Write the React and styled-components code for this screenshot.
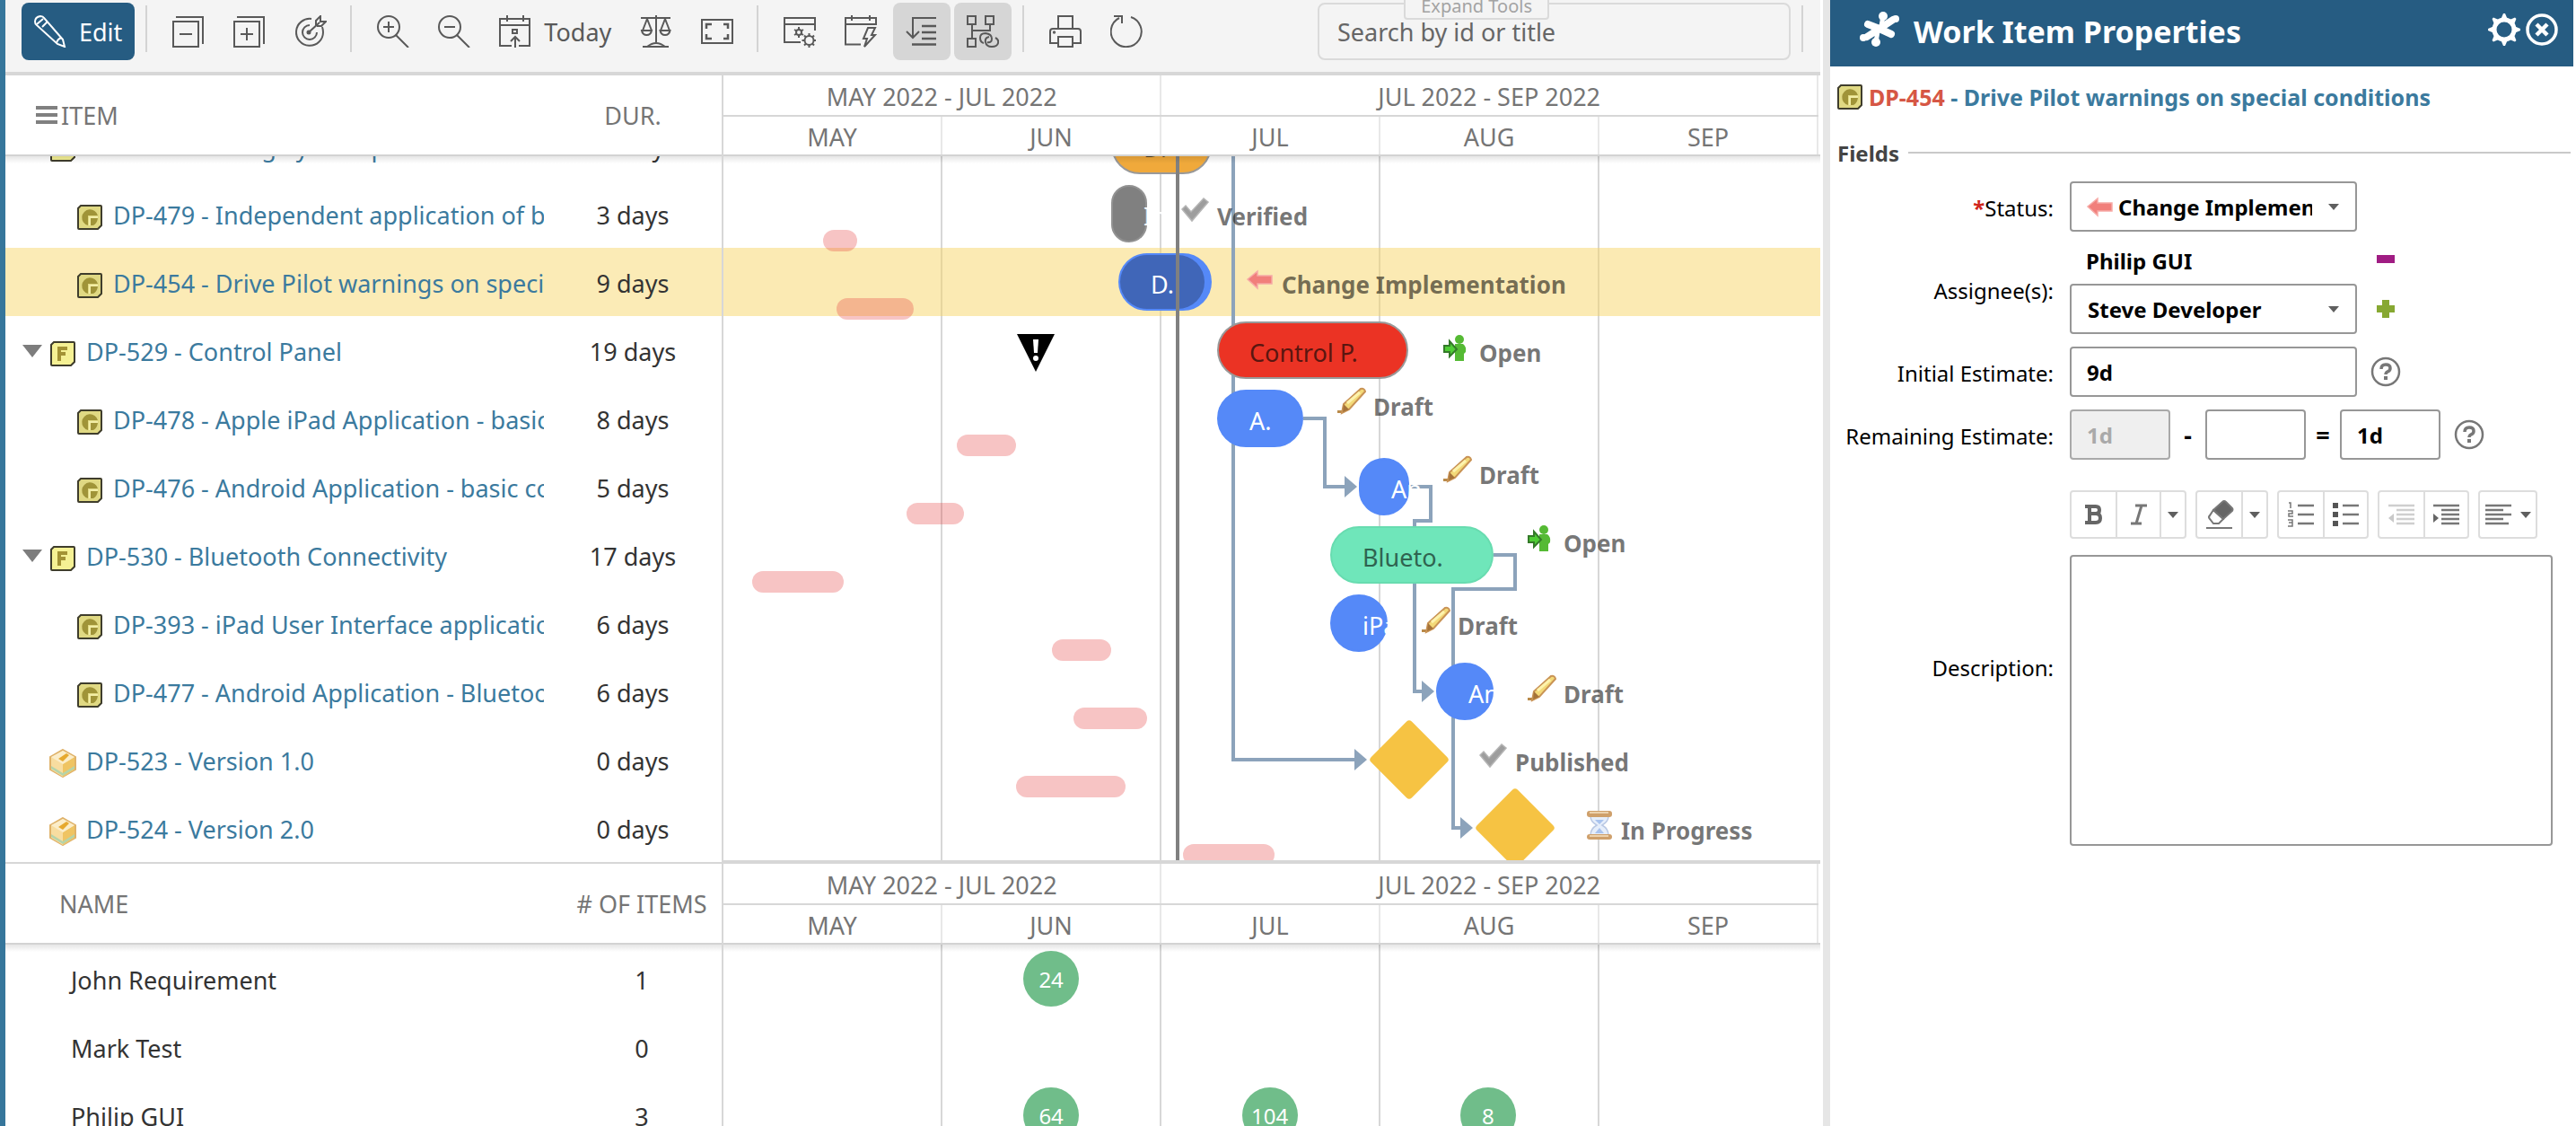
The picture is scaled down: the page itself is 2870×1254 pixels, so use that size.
import React, { useState } from 'react';
import styled, { createGlobalStyle, css } from 'styled-components';

const GlobalStyle = createGlobalStyle`
  * {
    box-sizing: border-box;
  }

  body {
    margin: 0;
    overflow: hidden;
    background: #ffffff;
    font-family: 'Noto Sans', 'Open Sans', sans-serif;
    font-size: 27px;
    color: #333333;
  }

  button, input, select, textarea {
    font-family: inherit;
    color: inherit;
  }
`;

const Page = styled.div`
  display: flex;
  height: 100vh;
  overflow: hidden;
`;

const PlanPane = styled.main`
  flex: 1;
  min-width: 0;
  display: flex;
  flex-direction: column;
  border-left: 6px solid #36769b;
`;

const Divider = styled.div`
  flex: none;
  width: 8px;
  margin-left: 3px;
  background: #e6e6e6;
`;

/* toolbar */

const Toolbar = styled.div`
  position: relative;
  flex: none;
  display: flex;
  align-items: flex-start;
  gap: 4px;
  height: 84px;
  padding: 3px 10px 0 18px;
  background: #f4f4f4;
  border-bottom: 4px solid #d7d7d7;
`;

const ToolButton = styled.button`
  display: flex;
  align-items: center;
  gap: 14px;
  height: 64px;
  padding: 0 14px;
  border: none;
  border-radius: 8px;
  background: ${props => (props.$active ? '#d6d6d6' : 'transparent')};
  color: #595959;
  font-size: 27px;
  cursor: pointer;

  svg {
    flex: none;
  }
`;

const EditButton = styled(ToolButton)`
  background: #265c82;
  color: #ffffff;
`;

const ToolSeparator = styled.div`
  flex: none;
  width: 2px;
  height: 52px;
  margin: 3px 10px 0 8px;
  background: #d3d3d3;

  &:last-of-type {
    margin-right: 9px;
  }
`;

const SearchBox = styled.input`
  width: 527px;
  height: 64px;
  margin-left: auto;
  padding: 0 20px;
  border: 2px solid #dadada;
  border-radius: 8px;
  background: #f4f4f4;
  font-size: 27px;

  &::placeholder {
    color: #666666;
    opacity: 1;
  }
`;

const ExpandTools = styled.button`
  position: absolute;
  right: 302px;
  top: -14px;
  height: 36px;
  padding: 5px 17px 0;
  border: 2px solid #dadada;
  border-radius: 4px;
  background: #f4f4f4;
  color: #a3a3a3;
  font-size: 20px;
  line-height: 24px;
`;

/* grid tables */

const Section = styled.section`
  display: flex;
  flex: ${props => (props.$grow ? '1' : 'none')};
  min-height: 0;
  overflow: hidden;
`;

const DataTable = styled.table`
  flex: none;
  width: 800px;
  align-self: flex-start;
  table-layout: fixed;
  border-collapse: separate;
  border-spacing: 0;
  border-right: 2px solid #d7d7d7;
  border-bottom: 2px solid #d7d7d7;

  td, th {
    padding: 0;
  }
`;

const headShadow = css`
  &::after {
    content: '';
    position: absolute;
    left: 0;
    right: 0;
    top: calc(100% + 2px);
    height: 8px;
    background: linear-gradient(rgba(0, 0, 0, 0.1), rgba(0, 0, 0, 0));
  }
`;

const HeadCell = styled.th`
  position: relative;
  z-index: 1;
  height: 90px;
  background: #ffffff;
  border-bottom: 2px solid #d3d3d3;
  color: #757575;
  font-weight: 400;
  text-align: center;
  ${headShadow}
`;

const HeadLabel = styled.div`
  display: flex;
  align-items: center;
  gap: 4px;
  padding-left: ${props => props.$indent}px;
`;

const BodyRow = styled.tr`
  background: ${props => (props.$selected ? '#fbebb6' : '#ffffff')};
`;

const CellClip = styled.div`
  display: flex;
  align-items: flex-end;
  justify-content: ${props => (props.$center ? 'center' : 'flex-start')};
  height: ${props => (props.$partial ? 26 : 76)}px;
  overflow: hidden;
  white-space: nowrap;
`;

const CellContent = styled.div`
  flex: none;
  display: flex;
  align-items: center;
  height: 76px;
  padding-top: 2px;
  padding-left: ${props => props.$indent || 0}px;
`;

const Toggle = styled.button`
  width: 22px;
  height: 16px;
  margin-right: 9px;
  padding: 0;
  border: none;
  background: none;
  visibility: ${props => (props.$hidden ? 'hidden' : 'visible')};

  svg {
    display: block;
  }
`;

const IconSlot = styled.span`
  display: flex;
  justify-content: center;
  width: 28px;
  padding-top: 6px;

  svg {
    flex: none;
  }
`;

const ItemLink = styled.a`
  margin-left: 12px;
  color: #3b7a9e;
  text-decoration: none;
`;

/* timeline */

const Timeline = styled.div`
  flex: 1;
  min-width: 0;
  display: flex;
  flex-direction: column;
`;

const TimelineHead = styled.div`
  position: relative;
  z-index: 1;
  flex: none;
  height: 90px;
  padding-right: 2px;
  border-bottom: 2px solid #d3d3d3;
  background: #ffffff;
  color: #757575;
  ${headShadow}
`;

const HeadBand = styled.div`
  display: flex;
  height: ${props => (props.$top ? 46 : 42)}px;
  border-bottom: ${props => (props.$top ? '2px solid #d7d7d7' : 'none')};
`;

const Period = styled.div`
  flex: ${props => props.$months};
  display: flex;
  align-items: center;
  justify-content: center;
  padding-top: 2px;
  border-right: 2px solid #e8e8e8;
`;

const TimelineBody = styled.div`
  position: relative;
  flex: 1;
  display: flex;
  min-height: 0;
  padding-right: 2px;
  overflow: hidden;
  border-bottom: ${props => (props.$ruled ? '4px solid #d7d7d7' : 'none')};
`;

const MonthColumn = styled.div`
  flex: 1;
  border-right: 2px solid ${props => (props.$last ? 'transparent' : '#d7d7d7')};
`;

const RowHighlight = styled.div`
  position: absolute;
  left: 0;
  right: 0;
  top: ${props => props.$y}px;
  height: 76px;
  background: rgba(247, 214, 104, 0.5);
`;

const Connectors = styled.svg`
  position: absolute;
  left: 0;
  top: 0;
  width: 100%;
  height: 100%;
`;

const Baseline = styled.div`
  position: absolute;
  left: ${props => props.$x}px;
  top: ${props => props.$y}px;
  width: ${props => props.$w}px;
  height: 24px;
  border-radius: 12px;
  background: rgba(230, 60, 60, 0.3);
`;

const barTones = {
  orange: css`
    background: #f0a93b;
    border: 2px solid #999999;
    color: #4c3a1c;
  `,
  gray: css`
    background: #808080;
    border: 2px solid #929292;
    color: #ffffff;
  `,
  blue: css`
    background: #5589f8;
    border: 2px solid #5589f8;
    color: #ffffff;
  `,
  red: css`
    background: #eb3324;
    border: 2px solid #999999;
    color: #5a1610;
  `,
  green: css`
    background: #6fe6ba;
    border: 2px solid #68dcb0;
    color: #2f6350;
  `,
};

const Bar = styled.div`
  position: absolute;
  left: ${props => props.$x}px;
  top: ${props => props.$y}px;
  width: ${props => props.$w}px;
  height: 64px;
  padding: 6px 0 0 34px;
  border-radius: 32px;
  line-height: 54px;
  white-space: nowrap;
  ${props => barTones[props.$tone]}
`;

const Progress = styled.div`
  position: absolute;
  left: 0;
  top: 0;
  width: ${props => props.$w}px;
  height: 60px;
  border-radius: 30px;
  background: #4066b8;
`;

const BarLabel = styled.span`
  position: relative;
`;

const Milestone = styled.div`
  position: absolute;
  left: ${props => props.$x - 32}px;
  top: ${props => props.$y - 32}px;
  width: 64px;
  height: 64px;
  border-radius: 4px;
  background: #f6c343;
  transform: rotate(45deg);
`;

const StatusTag = styled.div`
  position: absolute;
  left: ${props => props.$x}px;
  top: ${props => props.$y}px;
  display: flex;
  align-items: center;
  gap: 8px;
  height: 42px;
  color: rgba(0, 0, 0, 0.55);
  font-size: 26px;
  font-weight: 700;
  white-space: nowrap;

  svg {
    flex: none;
    margin-bottom: 12px;
  }
`;

const TodayLine = styled.div`
  position: absolute;
  left: 504px;
  top: 0;
  bottom: 0;
  width: 4px;
  background: #808080;
`;

const Warning = styled.div`
  position: absolute;
  left: 327px;
  top: 198px;
`;

const LoadRow = styled.div`
  position: absolute;
  left: 0;
  right: 0;
  top: ${props => props.$y}px;
  display: flex;
  align-items: center;
  height: 76px;
  padding-right: 5px;
`;

const LoadCell = styled.div`
  flex: 1;
  display: flex;
  justify-content: center;
`;

const LoadBubble = styled.div`
  width: 62px;
  height: 62px;
  border-radius: 50%;
  background: #70bd8a;
  color: #ffffff;
  font-size: 24px;
  line-height: 64px;
  text-align: center;
`;

/* properties */

const PropertiesPane = styled.aside`
  flex: none;
  width: 831px;
  padding-right: 3px;
  color: #000000;
`;

const PaneHeader = styled.header`
  display: flex;
  align-items: center;
  gap: 6px;
  height: 74px;
  padding: 0 17px 8px 32px;
  background: #265c82;
  color: #ffffff;
`;

const PaneTitle = styled.h1`
  flex: 1;
  margin: 0 0 0 7px;
  padding-top: 4px;
  font-size: 34px;
  font-weight: 700;
`;

const IconButton = styled.button`
  display: flex;
  align-items: center;
  justify-content: center;
  min-width: 36px;
  height: 36px;
  padding: 0;
  border: none;
  background: none;
  cursor: pointer;
`;

const ItemHeading = styled.h2`
  display: flex;
  align-items: center;
  gap: 7px;
  height: 68px;
  margin: 0;
  padding-left: 8px;
  font-size: 25px;
  font-weight: 700;
  white-space: nowrap;

  a {
    color: #3b7a9e;
    text-decoration: none;
  }
`;

const ItemId = styled.span`
  color: #d65745;
`;

const GroupTitle = styled.h3`
  display: flex;
  align-items: center;
  gap: 10px;
  height: 56px;
  margin: 0 3px 4px 8px;
  color: #444444;
  font-size: 24px;
  font-weight: 700;

  &::after {
    content: '';
    flex: 1;
    height: 2px;
    background: #c9c9c9;
  }
`;

const Form = styled.form`
  display: grid;
  grid-template-columns: 249px 1fr;
  column-gap: 18px;
  row-gap: 14px;
  align-items: center;
  font-size: 24px;
`;

const FieldLabel = styled.label`
  padding-top: ${props => (props.$tall ? 18 : 2)}px;
  text-align: right;
  white-space: nowrap;
`;

const Required = styled.span`
  color: #d0271d;
  font-weight: 700;
`;

const FieldLine = styled.div`
  display: flex;
  align-items: center;
  gap: ${props => props.$gap || 0}px;
`;

const AssigneeName = styled.div`
  width: 320px;
  height: 44px;
  padding-left: 18px;
  font-weight: 700;
  line-height: 38px;
`;

const SelectWrap = styled.div`
  position: relative;
  width: 320px;

  svg {
    position: absolute;
    top: 50%;
    transform: translateY(-50%);
    pointer-events: none;
  }

  svg:first-of-type {
    left: 18px;
  }

  svg:last-of-type {
    left: auto;
    right: 20px;
  }
`;

const fieldBox = css`
  height: 56px;
  border: 2px solid #979797;
  border-radius: 4px;
  background: #ffffff;
  color: #000000;
  font-size: 24px;
  font-weight: 700;
`;

const Select = styled.select`
  ${fieldBox}
  width: 100%;
  padding: 0 48px 0 ${props => (props.$icon ? 52 : 18)}px;
  appearance: none;
  text-overflow: clip;
`;

const TextInput = styled.input`
  ${fieldBox}
  width: ${props => props.$width}px;
  padding: 0 17px;

  &:disabled {
    border-color: #a9a9a9;
    background: #efefef;
    color: #a9a9a9;
  }
`;

const Operator = styled.span`
  width: ${props => props.$width}px;
  font-size: 27px;
  font-weight: 700;
  text-align: center;
`;

const Editor = styled.div`
  padding-top: 20px;
`;

const EditorTools = styled.div`
  display: flex;
  gap: 10px;
  margin-bottom: 18px;
`;

const ToolGroup = styled.div`
  display: flex;
  height: 54px;
  border: 2px solid #dddddd;
  border-radius: 4px;
`;

const EditorButton = styled.button`
  display: flex;
  align-items: center;
  justify-content: center;
  gap: 8px;
  width: ${props => props.$width || 49}px;
  padding: 0;
  border: none;
  background: none;
  color: #666666;

  svg {
    opacity: ${props => (props.disabled ? 0.35 : 1)};
  }

  & + & {
    border-left: 2px solid #dddddd;
  }
`;

const Description = styled.textarea`
  display: block;
  width: calc(100% - 23px);
  height: 324px;
  border: 2px solid #979797;
  border-radius: 4px;
  resize: none;
`;

/* icons */

const toolShapes = {
  collapse: (
    <>
      <path d="M1 7h28v28H1z M8 21h14" />
      <path d="M4 2h30v30" />
    </>
  ),
  expand: (
    <>
      <path d="M1 7h28v28H1z M8 21h14 M15 14v14" />
      <path d="M4 2h30v30" />
    </>
  ),
  target: (
    <>
      <path d="M19 4a15 15 0 1 0 13 15q0-3-1-6" />
      <path d="M17 11a8 8 0 1 0 8 8" />
      <path d="M16 19L28 8 M24 11V6l5-5v6h6l-5 5h-5" />
      <circle cx="16" cy="19" r="1.5" fill="currentColor" />
    </>
  ),
  zoomIn: (
    <>
      <circle cx="13" cy="13" r="12" />
      <path d="M21 22l14 14M13 7v12M7 13h12" />
    </>
  ),
  zoomOut: (
    <>
      <circle cx="13" cy="13" r="12" />
      <path d="M21 22l14 14M7 13h12" />
    </>
  ),
  today: (
    <>
      <path d="M14 34H1V4h33v30h-12M1 11h33M9 0v7M27 0v7" />
      <path d="M15 16h5v4h-5zM18 36V24M13 29l5-5 5 5" />
    </>
  ),
  balance: (
    <>
      <path d="M1 3h33M18 0v30M3 35h29M8 35q10-8 20 0" />
      <path d="M8 4L3 17M8 4l5 13M28 4l-5 13M28 4l5 13" />
      <path d="M2 17h11q-1 5-5.500 5t-5.500-5zM22.500 17h11q-1 5-5.500 5t-5.500-5z" />
    </>
  ),
  fullscreen: (
    <>
      <path d="M1 5h34v26H1z" />
      <path d="M6 15v-5h6M25 10h5v5M30 21v5h-5M12 26H6v-5" strokeWidth="2.500" />
    </>
  ),
  gears: (
    <>
      <path d="M19 30H1V3h34v14M1 10h34" />
      <circle cx="17" cy="19" r="3" />
      <path d="M17 13v3M17 22v3M12 16l2.500 1.500M19.500 20.500L22 22M12 22l2.500-1.500M19.500 17.500L22 16" />
      <circle cx="28.500" cy="28" r="5" />
      <path d="M28.500 20v3M28.500 33v3M20.500 28h3M33.500 28h3M23 22.500l2 2M32 31.500l2 2M23 33.500l2-2M32 24.500l2-2" />
    </>
  ),
  bolt: (
    <>
      <path d="M18 32.500H1V3h34v7H1M8 0v6M28 0v6" />
      <path d="M26 14h8l-4 8h4L22 35l3-9h-4z" />
    </>
  ),
  sortDown: (
    <>
      <path d="M34 3H8v22M1 18l7 7 7-7" />
      <path d="M18 12h16M18 19h16M18 26h16M7 32.500h27" strokeWidth="2.500" />
    </>
  ),
  links: (
    <>
      <path d="M1 1h9v9H1zM21 1h9v9h-9zM1 26h9v9H1z" />
      <path d="M6 10v16M6 17h20v-7" />
      <path d="M19 31q-4-1-4-6t6-5q7 1 7 6t-5 4" />
      <path d="M32 25q4 2 3 6t-7 4-7-5 4-6" />
    </>
  ),
  print: (
    <>
      <path d="M10 14V1h16v13" />
      <path d="M10 31H1V18q0-3 3-3h28q3 0 3 3v13h-9" />
      <path d="M10 24h16v11H10z" />
      <circle cx="5.500" cy="19" r="0.700" />
    </>
  ),
  refresh: (
    <>
      <path d="M23 2a17 17 0 1 1-13 1" />
      <path d="M4 1h9v8" />
    </>
  ),
  pencil: (
    <>
      <path d="M1 7q0-5 6-6 3 0 4 2l21 24 2 8-8-3L3 11q-2-1-2-4z" />
      <path d="M3 10l7-6M9 13l6-6M25 31q1-5 6-6" />
    </>
  ),
};

const ToolIcon = ({ name }) => (
  <svg width="36" height="36" viewBox="0 0 36 36" fill="none" stroke="currentColor" strokeWidth="2">
    {toolShapes[name]}
  </svg>
);

const Caret = () => (
  <svg width="12" height="8" viewBox="0 0 12 8">
    <path d="M0 1h12L6 8z" fill="#5f5f5f" />
  </svg>
);

const ItemIcon = ({ type }) => {
  if (type === 'version') {
    return (
      <svg width="32" height="32" viewBox="0 0 32 32">
        <path d="M16 1l14 8v14l-14 8L2 23V9z" fill="#f6dfa6" stroke="#dfb269" strokeWidth="2" />
        <path d="M3 9l13 8 13-8v14l-13 8-13-8z" fill="#f8dda0" />
        <path d="M16 17l13-8v14l-13 8z" fill="#efc463" />
        <path d="M3 19l13 8 13-8v3l-13 8-13-8z" fill="#b5d4aa" />
        <path d="M3 9l13-7 13 7-13 8z" fill="#fbedc9" />
        <path d="M11 11l5 3 7-7-3-2z" fill="#e6a92f" />
      </svg>
    );
  }
  return (
    <svg width="28" height="28" viewBox="0 0 28 28">
      <path
        d="M4 1h22q1 0 1 1v21l-4 4H2q-1 0-1-1V4z"
        fill={type === 'folder' ? '#f5f194' : '#e0d983'}
        stroke="#3f3d2c"
        strokeWidth="2"
      />
      {type === 'folder' ? (
        <path d="M10 22V8h9M10 14h7" fill="none" stroke="#a39335" strokeWidth="4" />
      ) : (
        <>
          <path d="M12 23a9 9 0 1 1 11-11h-11z" fill="#a09438" />
          <path d="M15 15h8q-1 6-5 8h-3z" fill="#a09438" />
          <path d="M14 23V14h9" fill="none" stroke="#f2eda6" strokeWidth="2" />
        </>
      )}
    </svg>
  );
};

const StatusIcon = ({ type }) => (
  <svg width="32" height="32" viewBox="0 0 32 32">
    {type === 'check' && (
      <path d="M1 14l4-4 6 7L25 2l5 4-18 21z" fill="#9d9d9d" stroke="#b5b5b5" strokeWidth="1.500" />
    )}
    {type === 'arrow' && (
      <path d="M2 16L13 7v5h16v9H13v5z" fill="#f17f7b" stroke="#f6aaa6" strokeWidth="1.500" />
    )}
    {type === 'open' && (
      <>
        <circle cx="18" cy="7" r="5" fill="#55ba34" />
        <path d="M13 12h9q4 3 3 9l-2 2v8H13z" fill="#55ba34" />
        <path d="M1 14h6V9l8 9-8 8v-5H1z" fill="#4fcd35" stroke="#347a29" strokeWidth="2" />
      </>
    )}
    {type === 'draft' && (
      <>
        <path d="M0 26h5l5-3-3 6H0z" fill="#b98a4a" />
        <path d="M7 19L26 2q4-1 5 3L13 25l-8 4z" fill="#f3d978" stroke="#c99355" strokeWidth="2" />
        <path d="M11 18L25 6" stroke="#fdf3ad" strokeWidth="3" />
        <path d="M7 19l6 6-7 3z" fill="#a5733a" />
      </>
    )}
    {type === 'hourglass' && (
      <>
        <path d="M6 6h20q0 6-7 10 7 4 7 11H6q0-7 7-11-7-4-7-10z" fill="#e6eefb" stroke="#b9c8e4" strokeWidth="1.500" />
        <path d="M11 10h10l-5 5zM16 19l5 6H11z" fill="#a9c3ee" />
        <rect x="2" y="0" width="28" height="7" rx="3" fill="#cfa06b" />
        <rect x="2" y="26" width="28" height="6" rx="3" fill="#cfa06b" />
        <path d="M5 2h21M5 28h21" stroke="#ecd2ae" strokeWidth="2" />
      </>
    )}
  </svg>
);

const HelpIcon = () => (
  <svg width="34" height="34" viewBox="0 0 34 34" fill="none" stroke="#777777">
    <circle cx="17" cy="17" r="15" strokeWidth="2.500" />
    <path d="M12 14q0-5 5-5t5 4q0 3-3 4-2 1-2 3" strokeWidth="3.500" />
    <path d="M17 22v4" strokeWidth="4" />
  </svg>
);

const PuzzleIcon = () => (
  <svg width="48" height="40" viewBox="0 0 48 40" fill="none" stroke="#ffffff">
    <path d="M10 14l13 5L38 9M36 25l-13-6L9 28" strokeWidth="8" strokeLinejoin="round" strokeLinecap="round" />
    <path d="M25 16l2-11M21 22l-2 12" strokeWidth="5" />
    <g fill="#ffffff" stroke="none">
      <circle cx="27" cy="5" r="5" />
      <circle cx="19" cy="34" r="5" />
      <circle cx="41" cy="8" r="4" />
      <circle cx="5" cy="29" r="4" />
    </g>
  </svg>
);

const GearIcon = () => (
  <svg width="36" height="36" viewBox="0 0 36 36" fill="none" stroke="#ffffff">
    <circle cx="18" cy="18" r="11" strokeWidth="5" />
    {[0, 45, 90, 135, 180, 225, 270, 315].map(angle => (
      <path key={angle} d="M17 0h2l3 7h-8z" fill="#ffffff" stroke="none" transform={`rotate(${angle} 18 18)`} />
    ))}
  </svg>
);

const CloseIcon = () => (
  <svg width="36" height="36" viewBox="0 0 36 36" fill="none" stroke="#ffffff">
    <circle cx="18" cy="18" r="16" strokeWidth="3.500" />
    <path d="M12 12l12 12M24 12L12 24" strokeWidth="4.500" />
  </svg>
);

const editorShapes = {
  eraser: (
    <>
      <path d="M19 2q2-2 4 0l7 7q1 1 0 3L20 21 9 11z" fill="#666666" />
      <path d="M9 11l11 10-5 5H9l-4-5q-2-2 0-4z" />
      <path d="M1 31h29" strokeWidth="2" />
    </>
  ),
  numbered: (
    <>
      <path d="M12 6h18M12 16h18M12 26h18" strokeWidth="2.500" />
      <path d="M2 3h2v6M1 12h5v3H2v3h5M1 22h5v7H1M2 25h4" strokeWidth="1.500" />
    </>
  ),
  bullets: (
    <>
      <path d="M12 6h18M12 16h18M12 26h18" strokeWidth="2.500" />
      <path d="M1 3h6v6H1zM1 13h6v6H1zM1 23h6v6H1z" fill="#555555" stroke="none" />
    </>
  ),
  outdent: (
    <>
      <path d="M1 6h29M10 11h20M10 16h20M10 21h20M10 26h20" strokeWidth="2.500" />
      <path d="M7 15v10l-6-5z" fill="#666666" stroke="none" />
    </>
  ),
  indent: (
    <>
      <path d="M1 6h29M10 11h20M10 16h20M10 21h20M10 26h20" strokeWidth="2.500" />
      <path d="M1 15v10l6-5z" fill="#666666" stroke="none" />
    </>
  ),
  align: (
    <path d="M1 6h29M1 11h20M1 16h29M1 21h20M1 26h26" strokeWidth="2.500" />
  ),
};

const EditorIcon = ({ name }) => (
  <svg width="32" height="34" viewBox="0 0 32 32" fill="none" stroke="#777777" strokeWidth="2">
    {editorShapes[name]}
  </svg>
);

/* data */

const items = [
  { title: 'DP-528 - Braking System p', icon: 'folder', days: '12 days', level: 0, partial: true },
  { title: 'DP-479 - Independent application of brakes', icon: 'task', days: '3 days', level: 1 },
  { title: 'DP-454 - Drive Pilot warnings on special conditions', icon: 'task', days: '9 days', level: 1, selected: true },
  { title: 'DP-529 - Control Panel', icon: 'folder', days: '19 days', level: 0, toggle: true },
  { title: 'DP-478 - Apple iPad Application - basic controls', icon: 'task', days: '8 days', level: 1 },
  { title: 'DP-476 - Android Application - basic controls', icon: 'task', days: '5 days', level: 1 },
  { title: 'DP-530 - Bluetooth Connectivity', icon: 'folder', days: '17 days', level: 0, toggle: true },
  { title: 'DP-393 - iPad User Interface application', icon: 'task', days: '6 days', level: 1 },
  { title: 'DP-477 - Android Application - Bluetooth', icon: 'task', days: '6 days', level: 1 },
  { title: 'DP-523 - Version 1.0', icon: 'version', days: '0 days', level: 0 },
  { title: 'DP-524 - Version 2.0', icon: 'version', days: '0 days', level: 0 },
];

// the first row is scrolled 50px under the header
const rowTop = row => row * 76 - 50;

const bars = [
  { row: 0, x: 432, w: 112, tone: 'orange', label: 'D.' },
  { row: 1, x: 432, w: 40, tone: 'gray', label: 'In' },
  { row: 2, x: 440, w: 104, tone: 'blue', label: 'D.', progress: 94 },
  { row: 3, x: 550, w: 213, tone: 'red', label: 'Control P.' },
  { row: 4, x: 550, w: 96, tone: 'blue', label: 'A.' },
  { row: 5, x: 708, w: 56, tone: 'blue', label: 'An' },
  { row: 6, x: 676, w: 182, tone: 'green', label: 'Blueto.' },
  { row: 7, x: 676, w: 64, tone: 'blue', label: 'iPa' },
  { row: 8, x: 794, w: 64, tone: 'blue', label: 'An' },
];

const baselines = [
  { row: 1, x: 111, w: 38 },
  { row: 2, x: 126, w: 86 },
  { row: 4, x: 260, w: 66 },
  { row: 5, x: 204, w: 64 },
  { row: 6, x: 32, w: 102 },
  { row: 7, x: 366, w: 66 },
  { row: 8, x: 390, w: 82 },
  { row: 9, x: 326, w: 122 },
  { row: 10, x: 512, w: 102 },
];

const statuses = [
  { row: 1, x: 510, icon: 'check', text: 'Verified' },
  { row: 2, x: 582, icon: 'arrow', text: 'Change Implementation' },
  { row: 3, x: 802, icon: 'open', text: 'Open' },
  { row: 4, x: 684, icon: 'draft', text: 'Draft', raised: true },
  { row: 5, x: 802, icon: 'draft', text: 'Draft', raised: true },
  { row: 6, x: 896, icon: 'open', text: 'Open', raised: true },
  { row: 7, x: 778, icon: 'draft', text: 'Draft' },
  { row: 8, x: 896, icon: 'draft', text: 'Draft' },
  { row: 9, x: 842, icon: 'check', text: 'Published' },
  { row: 10, x: 960, icon: 'hourglass', text: 'In Progress' },
];

const people = [
  { name: 'John Requirement', count: 1, load: [null, 24, null, null, null] },
  { name: 'Mark Test', count: 0, load: [] },
  { name: 'Philip GUI', count: 3, load: [null, 64, 104, 8, null] },
];

const months = ['MAY', 'JUN', 'JUL', 'AUG', 'SEP'];

const TimelineHeader = () => (
  <TimelineHead>
    <HeadBand $top>
      <Period $months={2}>MAY 2022 - JUL 2022</Period>
      <Period $months={3}>JUL 2022 - SEP 2022</Period>
    </HeadBand>
    <HeadBand>
      {months.map(month => (
        <Period key={month} $months={1}>{month}</Period>
      ))}
    </HeadBand>
  </TimelineHead>
);

const MonthColumns = () => months.map((month, i) => (
  <MonthColumn key={month} $last={i === months.length - 1} />
));

const MainToolbar = () => (
  <Toolbar>
    <EditButton>
      <ToolIcon name="pencil" />
      Edit
    </EditButton>
    <ToolSeparator />
    <ToolButton aria-label="Collapse all"><ToolIcon name="collapse" /></ToolButton>
    <ToolButton aria-label="Expand all"><ToolIcon name="expand" /></ToolButton>
    <ToolButton aria-label="Go to item"><ToolIcon name="target" /></ToolButton>
    <ToolSeparator />
    <ToolButton aria-label="Zoom in"><ToolIcon name="zoomIn" /></ToolButton>
    <ToolButton aria-label="Zoom out"><ToolIcon name="zoomOut" /></ToolButton>
    <ToolButton>
      <ToolIcon name="today" />
      Today
    </ToolButton>
    <ToolButton aria-label="Balance"><ToolIcon name="balance" /></ToolButton>
    <ToolButton aria-label="Fit to screen"><ToolIcon name="fullscreen" /></ToolButton>
    <ToolSeparator />
    <ToolButton aria-label="Plan settings"><ToolIcon name="gears" /></ToolButton>
    <ToolButton aria-label="Auto schedule"><ToolIcon name="bolt" /></ToolButton>
    <ToolButton aria-label="Sort" $active><ToolIcon name="sortDown" /></ToolButton>
    <ToolButton aria-label="Show links" $active><ToolIcon name="links" /></ToolButton>
    <ToolSeparator />
    <ToolButton aria-label="Print"><ToolIcon name="print" /></ToolButton>
    <ToolButton aria-label="Refresh"><ToolIcon name="refresh" /></ToolButton>
    <SearchBox type="text" aria-label="Search by id or title" placeholder="Search by id or title" />
    <ToolSeparator />
    <ExpandTools>Expand Tools</ExpandTools>
  </Toolbar>
);

const ItemsTable = () => (
  <DataTable>
    <colgroup>
      <col />
      <col width="198" />
    </colgroup>
    <thead>
      <tr>
        <HeadCell>
          <HeadLabel $indent={34}>
            <svg width="24" height="24" viewBox="0 0 24 24" stroke="#808080" strokeWidth="4">
              <path d="M0 4h24M0 12h24M0 20h24" />
            </svg>
            ITEM
          </HeadLabel>
        </HeadCell>
        <HeadCell>DUR.</HeadCell>
      </tr>
    </thead>
    <tbody>
      {items.map(item => (
        <BodyRow key={item.title} $selected={item.selected}>
          <td>
            <CellClip $partial={item.partial}>
              <CellContent $indent={item.level ? 49 : 19}>
                <Toggle $hidden={!item.toggle} aria-label="Collapse">
                  <svg width="22" height="14" viewBox="0 0 22 14">
                    <path d="M0 0h22L11 14z" fill="#7d7d7d" />
                  </svg>
                </Toggle>
                <IconSlot><ItemIcon type={item.icon} /></IconSlot>
                <ItemLink href="#">{item.title}</ItemLink>
              </CellContent>
            </CellClip>
          </td>
          <td>
            <CellClip $partial={item.partial} $center>
              <CellContent>{item.days}</CellContent>
            </CellClip>
          </td>
        </BodyRow>
      ))}
    </tbody>
  </DataTable>
);

const GanttChart = () => (
  <Timeline>
    <TimelineHeader />
    <TimelineBody $ruled>
      <MonthColumns />
      <RowHighlight $y={rowTop(2)} />
      {baselines.map(line => (
        <Baseline key={line.row} $x={line.x} $y={rowTop(line.row) + 56} $w={line.w} />
      ))}
      <Connectors fill="none" stroke="#8ca3bb" strokeWidth="4">
        <path d="M568 0V672H704" />
        <path d="M646 292H670V368H693" />
        <path d="M764 368H788V406H770V596H779" />
        <path d="M858 444H882V482H813V748H822" />
        <g fill="#8ca3bb" stroke="none">
          <path d="M703 660l14 12-14 12z" />
          <path d="M692 356l14 12-14 12z" />
          <path d="M778 584l14 12-14 12z" />
          <path d="M821 736l14 12-14 12z" />
        </g>
      </Connectors>
      {bars.map(bar => (
        <Bar key={bar.row} $x={bar.x} $y={rowTop(bar.row) + 6} $w={bar.w} $tone={bar.tone}>
          {bar.progress && <Progress $w={bar.progress} />}
          <BarLabel>{bar.label}</BarLabel>
        </Bar>
      ))}
      <Milestone $x={764} $y={672} />
      <Milestone $x={882} $y={748} />
      {statuses.map(status => (
        <StatusTag key={status.row} $x={status.x} $y={rowTop(status.row) + (status.raised ? 4 : 20)}>
          <StatusIcon type={status.icon} />
          {status.text}
        </StatusTag>
      ))}
      <Warning>
        <svg width="42" height="42" viewBox="0 0 42 42" role="img" aria-label="Warning">
          <path d="M0 0h42L21 42z" fill="#000000" />
          <path d="M18 6h6l-1 15h-4z" fill="#ffffff" />
          <circle cx="21" cy="27" r="3" fill="#ffffff" />
        </svg>
      </Warning>
      <TodayLine />
    </TimelineBody>
  </Timeline>
);

const PeopleTable = () => (
  <DataTable>
    <colgroup>
      <col />
      <col width="178" />
    </colgroup>
    <thead>
      <tr>
        <HeadCell>
          <HeadLabel $indent={60}>NAME</HeadLabel>
        </HeadCell>
        <HeadCell># OF ITEMS</HeadCell>
      </tr>
    </thead>
    <tbody>
      {people.map(person => (
        <BodyRow key={person.name}>
          <td>
            <CellClip>
              <CellContent $indent={73}>{person.name}</CellContent>
            </CellClip>
          </td>
          <td>
            <CellClip $center>
              <CellContent>{person.count}</CellContent>
            </CellClip>
          </td>
        </BodyRow>
      ))}
    </tbody>
  </DataTable>
);

const LoadChart = () => (
  <Timeline>
    <TimelineHeader />
    <TimelineBody>
      <MonthColumns />
      {people.map((person, row) => (
        <LoadRow key={person.name} $y={row * 76}>
          {person.load.map((value, i) => (
            <LoadCell key={months[i]}>{value && <LoadBubble>{value}</LoadBubble>}</LoadCell>
          ))}
        </LoadRow>
      ))}
    </TimelineBody>
  </Timeline>
);

const Properties = () => {
  const [estimate, setEstimate] = useState('9d');
  const [remaining, setRemaining] = useState('1d');

  return (
    <PropertiesPane>
      <PaneHeader>
        <PuzzleIcon />
        <PaneTitle>Work Item Properties</PaneTitle>
        <IconButton aria-label="Settings"><GearIcon /></IconButton>
        <IconButton aria-label="Close"><CloseIcon /></IconButton>
      </PaneHeader>
      <ItemHeading>
        <ItemIcon type="task" />
        <a href="#">
          <ItemId>DP-454</ItemId> - Drive Pilot warnings on special conditions
        </a>
      </ItemHeading>
      <GroupTitle>Fields</GroupTitle>
      <Form onSubmit={e => e.preventDefault()}>
        <FieldLabel htmlFor="status"><Required>*</Required>Status:</FieldLabel>
        <SelectWrap>
          <Select id="status" $icon>
            <option>Change Implementation</option>
          </Select>
          <StatusIcon type="arrow" />
          <Caret />
        </SelectWrap>

        <FieldLabel htmlFor="assignee">Assignee(s):</FieldLabel>
        <div>
          <FieldLine $gap={14}>
            <AssigneeName>Philip GUI</AssigneeName>
            <IconButton type="button" aria-label="Remove assignee">
              <svg width="20" height="20" viewBox="0 0 20 20">
                <path d="M0 0h20v9H0z" fill="#a01c83" />
              </svg>
            </IconButton>
          </FieldLine>
          <FieldLine $gap={14}>
            <SelectWrap>
              <Select id="assignee">
                <option>Steve Developer</option>
              </Select>
              <Caret />
            </SelectWrap>
            <IconButton type="button" aria-label="Add assignee">
              <svg width="20" height="20" viewBox="0 0 20 20">
                <path d="M6 0h8v6h6v8h-6v6H6v-6H0V6h6z" fill="#87a832" />
              </svg>
            </IconButton>
          </FieldLine>
        </div>

        <FieldLabel htmlFor="initial">Initial Estimate:</FieldLabel>
        <FieldLine $gap={15}>
          <TextInput id="initial" $width={320} value={estimate} onChange={e => setEstimate(e.target.value)} />
          <HelpIcon />
        </FieldLine>

        <FieldLabel htmlFor="remaining">Remaining Estimate:</FieldLabel>
        <FieldLine>
          <TextInput $width={112} aria-label="Previous estimate" value="1d" disabled />
          <Operator $width={39}>-</Operator>
          <TextInput $width={112} aria-label="Time spent" />
          <Operator $width={38}>=</Operator>
          <FieldLine $gap={15}>
            <TextInput id="remaining" $width={112} value={remaining} onChange={e => setRemaining(e.target.value)} />
            <HelpIcon />
          </FieldLine>
        </FieldLine>

        <FieldLabel htmlFor="description" $tall>Description:</FieldLabel>
        <Editor>
          <EditorTools>
            <ToolGroup>
              <EditorButton type="button" aria-label="Bold">
                <svg width="20" height="24" viewBox="0 0 20 24" fill="none" stroke="#666666" strokeWidth="4">
                  <path d="M5 2v20M0 3h12q4 0 4 4t-4 4H6M12 11q5 0 5 5t-5 5H0" />
                </svg>
              </EditorButton>
              <EditorButton type="button" aria-label="Italic">
                <svg width="20" height="24" viewBox="0 0 20 24" fill="none" stroke="#777777" strokeWidth="3">
                  <path d="M6 2h13M1 22h12M13 2L7 22" />
                </svg>
              </EditorButton>
              <EditorButton type="button" $width={28} aria-label="More styles"><Caret /></EditorButton>
            </ToolGroup>
            <ToolGroup>
              <EditorButton type="button" aria-label="Clear formatting"><EditorIcon name="eraser" /></EditorButton>
              <EditorButton type="button" $width={28} aria-label="More clearing"><Caret /></EditorButton>
            </ToolGroup>
            <ToolGroup>
              <EditorButton type="button" aria-label="Numbered list"><EditorIcon name="numbered" /></EditorButton>
              <EditorButton type="button" aria-label="Bulleted list"><EditorIcon name="bullets" /></EditorButton>
            </ToolGroup>
            <ToolGroup>
              <EditorButton type="button" aria-label="Outdent" disabled><EditorIcon name="outdent" /></EditorButton>
              <EditorButton type="button" aria-label="Indent"><EditorIcon name="indent" /></EditorButton>
            </ToolGroup>
            <ToolGroup>
              <EditorButton type="button" $width={62} aria-label="Align">
                <EditorIcon name="align" />
                <Caret />
              </EditorButton>
            </ToolGroup>
          </EditorTools>
          <Description id="description" />
        </Editor>
      </Form>
    </PropertiesPane>
  );
};

const App = () => (
  <>
    <GlobalStyle />
    <Page>
      <PlanPane>
        <MainToolbar />
        <Section>
          <ItemsTable />
          <GanttChart />
        </Section>
        <Section $grow>
          <PeopleTable />
          <LoadChart />
        </Section>
      </PlanPane>
      <Divider />
      <Properties />
    </Page>
  </>
);

export default App;
